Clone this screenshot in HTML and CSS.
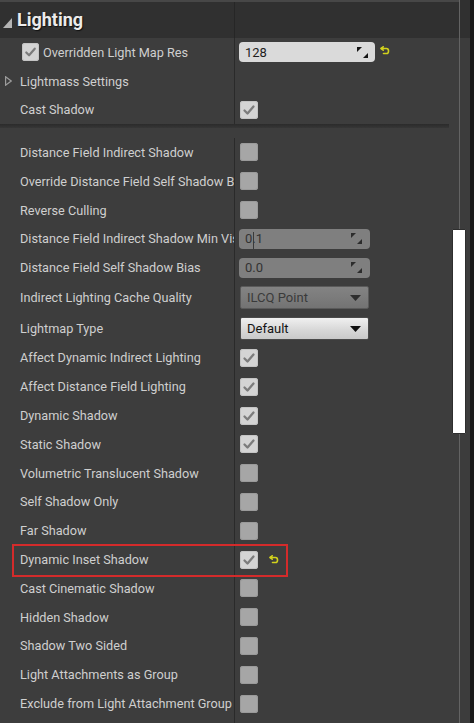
FILE: index.html
```html
<!DOCTYPE html>
<html>
<head>
<meta charset="utf-8">
<link rel="stylesheet" href="styles.css">
</head>
<body>
<div class="panel">
  <div class="main">
    <div class="header">
      <div class="hlabel">
        <svg class="htri" width="9" height="10" viewBox="0 0 9 10"><polygon points="9,0 9,10 0,10" fill="#b4b4b4"/></svg>
        <span class="htitle">Lighting</span>
      </div>
      <div class="hvalue"></div>
    </div>

    <div class="group">
      <div class="row">
        <div class="label label-cb"><span class="cb on"><svg viewBox="0 0 18 18"><path d="M4.5 9.5 L7.5 12.5 L13.5 5.5" /></svg></span>Overridden Light Map Res</div>
        <div class="value">
          <div class="num">128<svg class="spin" viewBox="0 0 11 11"><polygon points="0,0 5,0 0,5"/><polygon points="11,11 6,11 11,6"/></svg></div>
          <svg class="reset" width="10" height="10" viewBox="0 0 10 10"><path d="M1.5 2.5 H6.5 Q8.5 2.5 8.5 4.8 V5.2 Q8.5 7.5 6.5 7.5 H3.5" /><path class="head" d="M1 2.5 L3.2 0.8 M1 2.5 L3.2 4.2" /></svg>
        </div>
      </div>
      <div class="row">
        <div class="label"><svg class="expand" width="7" height="10" viewBox="0 0 7 10"><polygon points="0.6,0.8 6.2,5 0.6,9.2" /></svg>Lightmass Settings</div>
        <div class="value"></div>
      </div>
      <div class="row">
        <div class="label">Cast Shadow</div>
        <div class="value"><span class="cb on"><svg viewBox="0 0 18 18"><path d="M4.5 9.5 L7.5 12.5 L13.5 5.5" /></svg></span></div>
      </div>
    </div>

    <div class="sep"></div>

    <div class="group">
      <div class="row">
        <div class="label">Distance Field Indirect Shadow</div>
        <div class="value"><span class="cb"></span></div>
      </div>
      <div class="row">
        <div class="label">Override Distance Field Self Shadow Bias</div>
        <div class="value"><span class="cb"></span></div>
      </div>
      <div class="row">
        <div class="label">Reverse Culling</div>
        <div class="value"><span class="cb"></span></div>
      </div>
      <div class="row">
        <div class="label">Distance Field Indirect Shadow Min Visibility</div>
        <div class="value"><div class="num dis"><span class="numtext">0.1</span><span class="caret"></span><svg class="spin" viewBox="0 0 11 11"><polygon points="0,0 5,0 0,5"/><polygon points="11,11 6,11 11,6"/></svg></div></div>
      </div>
      <div class="row">
        <div class="label">Distance Field Self Shadow Bias</div>
        <div class="value"><div class="num dis">0.0<svg class="spin" viewBox="0 0 11 11"><polygon points="0,0 5,0 0,5"/><polygon points="11,11 6,11 11,6"/></svg></div></div>
      </div>
      <div class="row row-combo1">
        <div class="label">Indirect Lighting Cache Quality</div>
        <div class="value"><div class="combo dis">ILCQ Point<svg class="arrow" viewBox="0 0 11 6"><polygon points="0,0 11,0 5.5,6"/></svg></div></div>
      </div>
      <div class="row row-combo2">
        <div class="label">Lightmap Type</div>
        <div class="value"><div class="combo">Default<svg class="arrow" viewBox="0 0 11 6"><polygon points="0,0 11,0 5.5,6"/></svg></div></div>
      </div>
      <div class="row">
        <div class="label">Affect Dynamic Indirect Lighting</div>
        <div class="value"><span class="cb on"><svg viewBox="0 0 18 18"><path d="M4.5 9.5 L7.5 12.5 L13.5 5.5" /></svg></span></div>
      </div>
      <div class="row">
        <div class="label">Affect Distance Field Lighting</div>
        <div class="value"><span class="cb on"><svg viewBox="0 0 18 18"><path d="M4.5 9.5 L7.5 12.5 L13.5 5.5" /></svg></span></div>
      </div>
      <div class="row">
        <div class="label">Dynamic Shadow</div>
        <div class="value"><span class="cb on"><svg viewBox="0 0 18 18"><path d="M4.5 9.5 L7.5 12.5 L13.5 5.5" /></svg></span></div>
      </div>
      <div class="row">
        <div class="label">Static Shadow</div>
        <div class="value"><span class="cb on"><svg viewBox="0 0 18 18"><path d="M4.5 9.5 L7.5 12.5 L13.5 5.5" /></svg></span></div>
      </div>
      <div class="row">
        <div class="label">Volumetric Translucent Shadow</div>
        <div class="value"><span class="cb"></span></div>
      </div>
      <div class="row">
        <div class="label">Self Shadow Only</div>
        <div class="value"><span class="cb"></span></div>
      </div>
      <div class="row">
        <div class="label">Far Shadow</div>
        <div class="value"><span class="cb"></span></div>
      </div>
      <div class="row highlighted">
        <div class="label">Dynamic Inset Shadow</div>
        <div class="value"><span class="cb on"><svg viewBox="0 0 18 18"><path d="M4.5 9.5 L7.5 12.5 L13.5 5.5" /></svg></span>
          <svg class="reset reset-cb" width="10" height="10" viewBox="0 0 10 10"><path d="M1.5 2.5 H6.5 Q8.5 2.5 8.5 4.8 V5.2 Q8.5 7.5 6.5 7.5 H3.5" /><path class="head" d="M1 2.5 L3.2 0.8 M1 2.5 L3.2 4.2" /></svg>
        </div>
      </div>
      <div class="row">
        <div class="label">Cast Cinematic Shadow</div>
        <div class="value"><span class="cb"></span></div>
      </div>
      <div class="row">
        <div class="label">Hidden Shadow</div>
        <div class="value"><span class="cb"></span></div>
      </div>
      <div class="row">
        <div class="label">Shadow Two Sided</div>
        <div class="value"><span class="cb"></span></div>
      </div>
      <div class="row">
        <div class="label">Light Attachments as Group</div>
        <div class="value"><span class="cb"></span></div>
      </div>
      <div class="row">
        <div class="label">Exclude from Light Attachment Group</div>
        <div class="value"><span class="cb"></span></div>
      </div>
      <div class="row">
        <div class="label"></div>
        <div class="value"></div>
      </div>
    </div>
  </div>
  <div class="track"><div class="thumb"></div></div>
  <div class="edge"></div>
</div>
</body>
</html>
```

FILE: styles.css
```css
html, body {
  margin: 0;
  padding: 0;
  background: #3d3d3d;
  overflow: hidden;
}

.panel {
  display: flex;
  width: 474px;
  height: 723px;
  overflow: hidden;
  font-family: Roboto, "Liberation Sans", sans-serif;
  color: #cfcfcf;
  font-size: 12.7px;
}

.main {
  width: 459px;
  flex: none;
}

.header {
  display: flex;
  height: 38px;
  box-sizing: border-box;
  border-top: 2px solid #474747;
  background: #303030;
}

.hlabel {
  width: 235px;
  flex: none;
  box-sizing: border-box;
  border-right: 1px solid #262626;
  display: flex;
  align-items: center;
  padding-left: 3px;
  padding-top: 1px;
}

.htri {
  margin-right: 5px;
  margin-top: 5px;
}

.htitle {
  font-weight: bold;
  font-size: 18px;
  color: #ececec;
  text-shadow: 1px 1px 1px #111;
  margin-top: -2px;
}

.group {
  display: flex;
  flex-direction: column;
}

.row {
  display: flex;
  height: 28.8px;
  flex: none;
}

.row-combo1 { height: 30.8px; }
.row-combo2 { height: 30.7px; }

.label {
  width: 235px;
  flex: none;
  box-sizing: border-box;
  padding-left: 20px;
  border-right: 1px solid #2a2a2a;
  display: flex;
  align-items: center;
  white-space: nowrap;
  overflow: hidden;
}

.label-cb {
  padding-left: 22px;
}

.label-cb .cb {
  width: 17px;
  height: 18px;
  margin-right: 4px;
}

.expand {
  margin-left: -15px;
  margin-right: 8px;
}

.expand polygon {
  fill: none;
  stroke: #9c9c9c;
  stroke-width: 1.2;
}

.value {
  flex: 1;
  display: flex;
  align-items: center;
  padding-left: 5px;
  min-width: 0;
}

.cb {
  display: inline-block;
  width: 18px;
  height: 18px;
  border-radius: 3px;
  background: #a6a6a6;
  box-shadow: inset 0 0 0 1px #9a9a9a;
  flex: none;
}

.cb.on {
  background: #d4d4d4;
  box-shadow: inset 0 0 0 1px #c4c4c4;
}

.cb svg {
  width: 100%;
  height: 100%;
  display: block;
}

.cb svg path {
  fill: none;
  stroke: #7c7c7c;
  stroke-width: 2.3;
  stroke-linecap: round;
  stroke-linejoin: round;
}

.num {
  margin-left: -1px;
  width: 136px;
  height: 20px;
  box-sizing: border-box;
  border-radius: 4px;
  background: #dadada;
  color: #1e1e1e;
  display: flex;
  align-items: center;
  padding-left: 6px;
  position: relative;
  font-size: 13px;
}

.num .spin {
  width: 11px;
  height: 11px;
  position: absolute;
  right: 7px;
  top: 4.5px;
}

.num .spin polygon {
  fill: #141414;
}

.num.dis {
  width: 131px;
  background: #7f7f7f;
  color: #333;
}

.num.dis .spin {
  right: 8px;
}

.num.dis .spin polygon {
  fill: #2c2c2c;
}

.caret {
  position: absolute;
  left: 14px;
  top: 3px;
  width: 1px;
  height: 17px;
  background: #3a3a3a;
}

.reset {
  margin-left: 5px;
  margin-top: -3px;
}

.reset path {
  fill: none;
  stroke: #d2d21c;
  stroke-width: 1.6;
  stroke-linecap: round;
  stroke-linejoin: round;
}

.reset-cb {
  margin-left: 11px;
  margin-top: 0;
}

.combo {
  width: 129px;
  height: 23px;
  box-sizing: border-box;
  border-radius: 2px;
  border: 1px solid #4a4a4a;
  background: linear-gradient(#f0f0f0, #d8d8d8 55%, #c9c9c9);
  color: #141414;
  display: flex;
  align-items: center;
  padding-left: 6px;
  position: relative;
  font-size: 13px;
}

.combo .arrow {
  position: absolute;
  right: 7px;
  top: 8.5px;
  width: 11px;
  height: 6px;
}

.combo .arrow polygon {
  fill: #111;
}

.combo.dis {
  background: linear-gradient(#838383, #7a7a7a 60%, #737373);
  border-color: #5a5a5a;
  color: #3a3a3a;
}

.combo.dis .arrow polygon {
  fill: #2e2e2e;
}

.sep {
  height: 13.7px;
  flex: none;
}

.sep::before {
  content: "";
  display: block;
  width: 449px;
  height: 4px;
  background: linear-gradient(#2b2b2b, #363636);
}

.highlighted {
  position: relative;
}

.highlighted::after {
  content: "";
  position: absolute;
  left: 12px;
  top: -1px;
  width: 276px;
  height: 33px;
  box-sizing: border-box;
  border: 2px solid #d42b2b;
  pointer-events: none;
}

.track {
  width: 11px;
  flex: none;
  box-sizing: border-box;
  border-left: 1px solid #636363;
  background: linear-gradient(#303030 0 38px, #3c3c3c 38px);
  position: relative;
}

.thumb {
  position: absolute;
  left: -8px;
  top: 229px;
  width: 14px;
  height: 205px;
  box-sizing: border-box;
  background: #ffffff;
  border: 1px solid #2e2e2e;
  border-radius: 1px;
}

.edge {
  width: 4px;
  flex: none;
  background: #1b1b1b;
}
```
